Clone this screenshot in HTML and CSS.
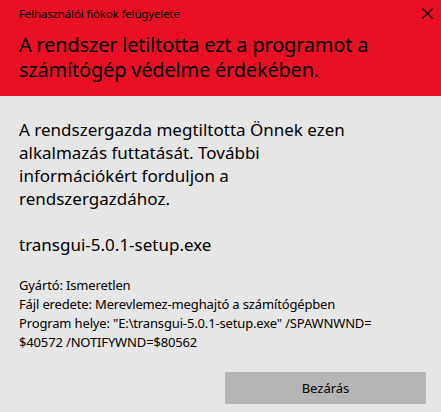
FILE: index.html
```html
<!DOCTYPE html>
<html lang="hu">
<head>
<meta charset="utf-8">
<title>Felhasználói fiókok felügyelete</title>
<link rel="stylesheet" href="styles.css">
</head>
<body>
<div class="dialog">
  <header class="banner">
    <div class="titlebar">
      <span class="title">Felhasználói fiókok felügyelete</span>
      <svg class="close" width="11" height="11" viewBox="0 0 11 11" aria-label="Bezárás">
        <path d="M0.5 0.5 L10.5 10.5 M10.5 0.5 L0.5 10.5" stroke="#000" stroke-width="1.1" fill="none"/>
      </svg>
    </div>
    <h1 class="heading">A rendszer letiltotta ezt a programot a<br>számítógép védelme érdekében.</h1>
  </header>
  <main class="content">
    <p class="message">A rendszergazda megtiltotta Önnek ezen<br>alkalmazás futtatását. További<br>információkért forduljon a<br>rendszergazdához.</p>
    <p class="filename">transgui-5.0.1-setup.exe</p>
    <div class="details">
      <div>Gyártó: Ismeretlen</div>
      <div>Fájl eredete: Merevlemez-meghajtó a számítógépben</div>
      <div>Program helye: "E:\transgui-5.0.1-setup.exe" /SPAWNWND=<br>$40572 /NOTIFYWND=$80562</div>
    </div>
    <div class="actions">
      <button class="btn">Bezárás</button>
    </div>
  </main>
</div>
</body>
</html>
```
FILE: styles.css
```css
html, body {
  margin: 0;
  padding: 0;
  background: #e6e6e6;
}
body {
  font-family: "Noto Sans", "Open Sans", sans-serif;
  color: #000;
  width: 441px;
  height: 412px;
  overflow: hidden;
}
.dialog {
  display: flex;
  flex-direction: column;
}
.banner {
  background: #e81123;
  height: 96px;
  box-sizing: border-box;
  padding: 6px 0 0 19px;
}
.titlebar {
  display: flex;
  justify-content: space-between;
  align-items: flex-start;
  padding-right: 8px;
}
.title {
  font-size: 11.5px;
  letter-spacing: -0.15px;
  line-height: 16px;
  white-space: nowrap;
}
.close {
  margin-top: 2px;
}
.heading {
  margin: 10px 0 0 0;
  font-weight: normal;
  font-size: 20px;
  letter-spacing: -0.2px;
  line-height: 25px;
  white-space: nowrap;
}
.content {
  padding: 22px 15px 0 19px;
  display: flex;
  flex-direction: column;
}
.message {
  margin: 0;
  font-size: 17px;
  line-height: 23px;
  white-space: nowrap;
}
.filename {
  margin: 22.6px 0 0 0;
  font-size: 17px;
  line-height: 23px;
  white-space: nowrap;
}
.details {
  margin-top: 20px;
  font-size: 13px;
  letter-spacing: -0.15px;
  line-height: 19px;
  white-space: nowrap;
}
.actions {
  display: flex;
  justify-content: flex-end;
  margin-top: 20.5px;
}
.btn {
  width: 201px;
  height: 32px;
  border: none;
  background: #b5b5b5;
  font-family: inherit;
  font-size: 13px;
  color: #000;
  padding: 0;
}
```
